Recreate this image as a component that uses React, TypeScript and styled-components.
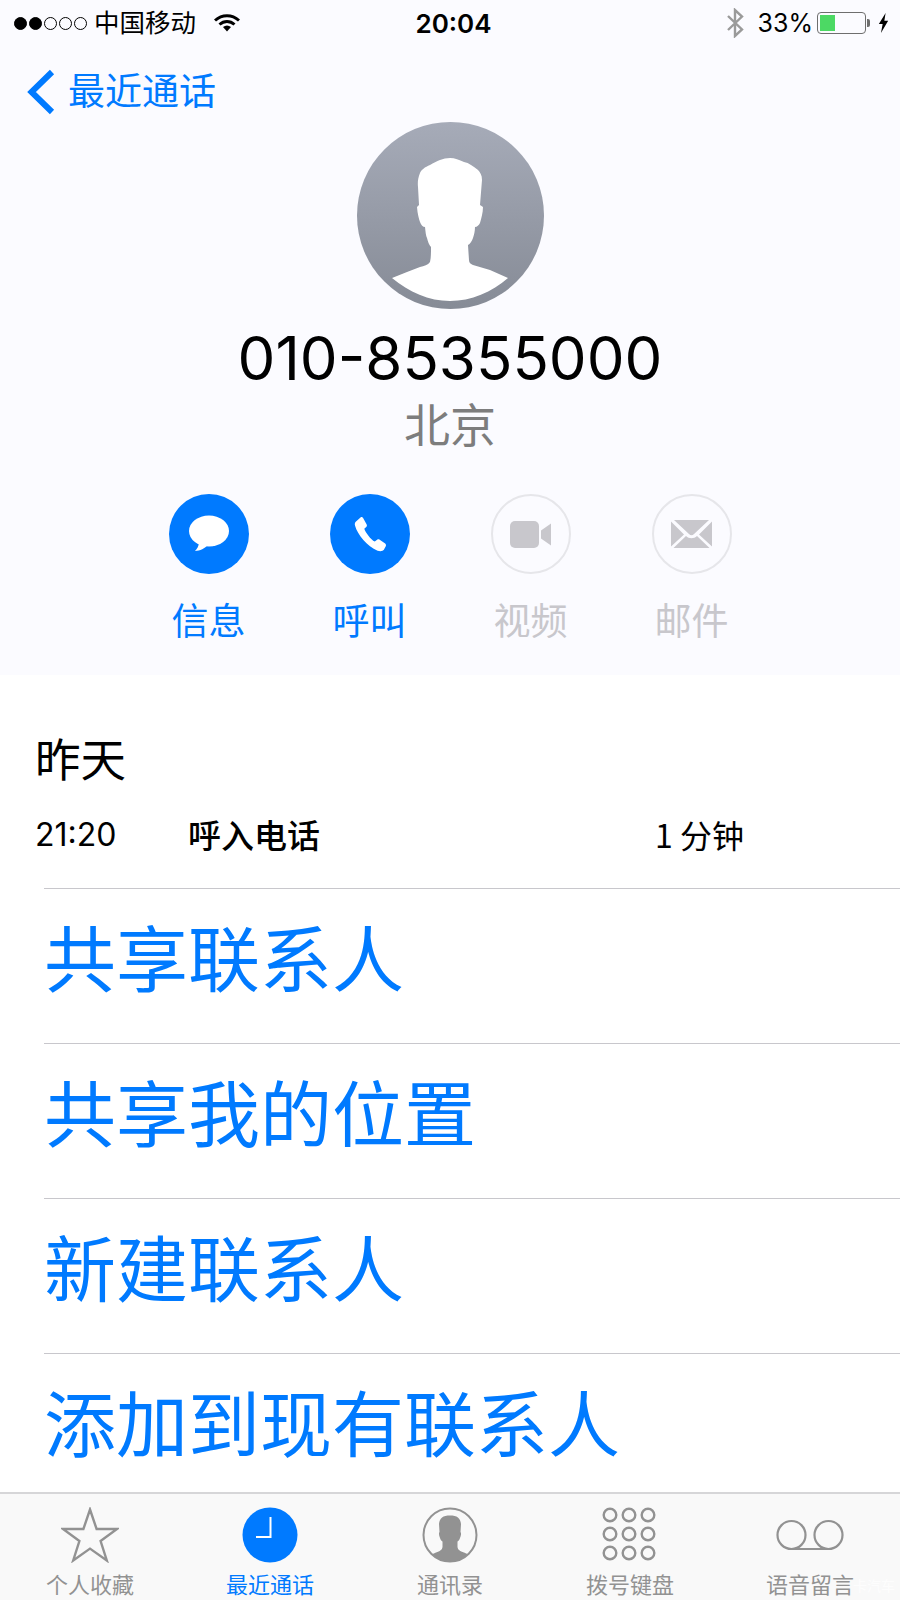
import styled, { createGlobalStyle } from "styled-components";

const CJK = `"Noto Sans CJK SC", "Noto Sans", sans-serif`;
const LATIN = `"Inter", "Noto Sans CJK SC", sans-serif`;
const BLUE = "#007aff";

const GlobalStyle = createGlobalStyle`
  html, body {
    margin: 0;
    padding: 0;
    background: #fff;
  }
`;

const actions = [
  { label: "信息", on: true, icon: "message" },
  { label: "呼叫", on: true, icon: "phone" },
  { label: "视频", on: false, icon: "video" },
  { label: "邮件", on: false, icon: "mail" },
];

const menu = ["共享联系人", "共享我的位置", "新建联系人", "添加到现有联系人"];

function ActionGlyph({ name }: { name: string }) {
  if (name === "message") {
    return (
      <svg width="42" height="38" viewBox="0 0 42 38">
        <ellipse cx="21" cy="16" rx="20" ry="15.5" fill="#fff" />
        <path d="M11 27 C11 31 9 34 7 36 C12 36 17 33 20 30 Z" fill="#fff" />
      </svg>
    );
  }
  if (name === "phone") {
    return (
      <svg width="36" height="38" viewBox="0 0 36 40">
        <path
          d="M3 7 L8 2.5 C9 1.8 10 2 10.6 3 L14.5 10 C15 11 14.8 12 14 12.6 L12 14.4 C13 18 19 26 23 28 L25.5 26 C26.4 25.4 27.4 25.4 28.2 26 L34 30 C35 31 35 32 34.6 33 L32.6 36.6 C31.6 38 29 38.6 26 37.6 C15 33 5 21 2.2 11 C1.8 9.4 2 8 3 7 Z"
          fill="#fff"
        />
      </svg>
    );
  }
  if (name === "video") {
    return (
      <svg width="42" height="27" viewBox="0 0 42 27">
        <rect x="0" y="0" width="29" height="27" rx="5" fill="#c8c7cc" />
        <path d="M31 9.5 L41 2.5 V24.5 L31 17.5 Z" fill="#c8c7cc" />
      </svg>
    );
  }
  return (
    <svg width="41" height="28" viewBox="0 0 41 28">
      <path d="M3 0 H38 L23 14 C21.5 15.6 19.5 15.6 18 14 Z" fill="#c8c7cc" />
      <path d="M0 1.5 L13 14.5 L0 26.5 Z M41 1.5 L28 14.5 L41 26.5 Z" fill="#c8c7cc" />
      <path d="M15 16 C18 19 23 19 26 16 L38.5 28 H2.5 Z" fill="#c8c7cc" />
    </svg>
  );
}

function TabGlyph({ name }: { name: string }) {
  if (name === "star") {
    return (
      <svg width="58" height="56" viewBox="0 0 58 56">
        <path
          d="M29 2.5 L35.6 22 H56 L39.6 34 L45.8 53.5 L29 41.6 L12.2 53.5 L18.4 34 L2 22 H22.4 Z"
          fill="none"
          stroke="#929292"
          strokeWidth="2.4"
        />
      </svg>
    );
  }
  if (name === "clock") {
    return (
      <svg width="56" height="56" viewBox="0 0 56 56">
        <circle cx="28" cy="28" r="27.5" fill={BLUE} />
        <path d="M28.5 10 V30 H14" fill="none" stroke="#fff" strokeWidth="2" />
      </svg>
    );
  }
  if (name === "person") {
    return (
      <svg width="56" height="56" viewBox="0 0 56 56">
        <defs>
          <clipPath id="contact-clip">
            <circle cx="28" cy="28" r="26.5" />
          </clipPath>
        </defs>
        <g clipPath="url(#contact-clip)">
          <path
            d="M28 8.5 C35 8.5 38.5 11 39 17 L38.5 25 C39.5 26 39 29 38 31 C37.5 33 36.5 34 35.5 34.5 L35.5 40 C36 43 38 44 42 45.5 L52 50 V56 H4 V50 L14 45.5 C18 44 20 43 20.5 40 L20.5 34.5 C19.5 34 18.5 33 18 31 C17 29 16.5 26 17.5 25 L17 17 C17.5 11 21 8.5 28 8.5 Z"
            fill="#929292"
          />
        </g>
        <circle cx="28" cy="28" r="26.5" fill="none" stroke="#929292" strokeWidth="2" />
      </svg>
    );
  }
  if (name === "keypad") {
    const spots = [8, 27, 46];
    return (
      <svg width="56" height="56" viewBox="0 0 56 56">
        {spots.map((cy) =>
          spots.map((cx) => (
            <circle
              key={`${cx}-${cy}`}
              cx={cx}
              cy={cy}
              r="6.3"
              fill="none"
              stroke="#929292"
              strokeWidth="2.4"
            />
          ))
        )}
      </svg>
    );
  }
  return (
    <svg width="68" height="32" viewBox="0 0 68 32">
      <circle cx="15.5" cy="16" r="14" fill="none" stroke="#929292" strokeWidth="2.2" />
      <circle cx="52.5" cy="16" r="14" fill="none" stroke="#929292" strokeWidth="2.2" />
      <path d="M15.5 30 H52.5" stroke="#929292" strokeWidth="2.2" />
    </svg>
  );
}

const tabs = [
  { label: "个人收藏", icon: "star", on: false },
  { label: "最近通话", icon: "clock", on: true },
  { label: "通讯录", icon: "person", on: false },
  { label: "拨号键盘", icon: "keypad", on: false },
  { label: "语音留言", icon: "voicemail", on: false },
];

export default function App() {
  return (
    <>
      <GlobalStyle />
      <Screen>
        <Header>
          <StatusBar>
            <StatusLeft>
              <Signal>
                <Dot $full />
                <Dot $full />
                <Dot />
                <Dot />
                <Dot />
              </Signal>
              <Carrier>中国移动</Carrier>
              <svg width="26" height="18" viewBox="0 0 26 18">
                <path d="M1 6.5 C8 0 18 0 25 6.5" fill="none" stroke="#000" strokeWidth="3" />
                <path d="M5.5 10.5 C10 6.5 16 6.5 20.5 10.5" fill="none" stroke="#000" strokeWidth="3" />
                <path d="M9 13 C11.5 11 14.5 11 17 13 L13 17.5 Z" fill="#000" />
              </svg>
            </StatusLeft>
            <Clock>20:04</Clock>
            <StatusRight>
              <svg width="18" height="30" viewBox="0 0 18 30">
                <path
                  d="M2 8 L16 21.5 L9 28 V2 L16 8.5 L2 22"
                  fill="none"
                  stroke="#9a9a9a"
                  strokeWidth="2.4"
                />
              </svg>
              <Percent>33%</Percent>
              <Battery>
                <BatteryFill />
              </Battery>
              <BatteryCap />
              <svg width="11" height="20" viewBox="0 0 13 22" preserveAspectRatio="none">
                <path d="M9 0 L1 12 H5.5 L3.5 22 L12 8.5 H7.5 Z" fill="#000" />
              </svg>
            </StatusRight>
          </StatusBar>
          <BackRow>
            <svg width="30" height="46" viewBox="0 0 30 46">
              <path d="M27 3 L6.5 23 L27 43" fill="none" stroke={BLUE} strokeWidth="6" />
            </svg>
            <BackLabel>最近通话</BackLabel>
          </BackRow>
          <Avatar>
            <svg width="187" height="187" viewBox="0 0 187 187">
              <path
                d="M93 36 C86 36 80 39 73 43 C68 45 64 48 63 51 C61 56 60.5 60 61 65 L62 83 L60 85 C60.5 92 62 97 63 100 C64 103 66 105 68 105 C68.5 110 69 114 70 116 C71 120 72 123 74 125 C74 131 74 136 73 140 C71 143 67 144 63 145 L50 150 L35 156 C52 170 72 179 93 179 C114 179 135 170 151 156 L133 148 L116 143 C113 142 112 140 112 138 L111 123 C113 122 115 119 116 116 C117 113 118 109 118 105 C120 105 122 103 123 101 C124 97 126 91 126 85 L123 83 L125 58 C125 53 123 50 121 48 C116 44 112 41 107 40 C102 38 98 36 93 36 Z"
                fill="#fff"
              />
            </svg>
          </Avatar>
          <PhoneNumber>010-85355000</PhoneNumber>
          <Place>北京</Place>
          <Actions>
            {actions.map((action) => (
              <Action key={action.label}>
                <ActionCircle $on={action.on}>
                  <ActionGlyph name={action.icon} />
                </ActionCircle>
                <ActionLabel $on={action.on}>{action.label}</ActionLabel>
              </Action>
            ))}
          </Actions>
        </Header>
        <History>
          <DayLabel>昨天</DayLabel>
          <CallRow>
            <CallTime>21:20</CallTime>
            <CallType>呼入电话</CallType>
            <CallLength>1 分钟</CallLength>
          </CallRow>
        </History>
        <Menu>
          {menu.map((item) => (
            <MenuItem key={item}>{item}</MenuItem>
          ))}
        </Menu>
        <TabBar>
          {tabs.map((tab) => (
            <Tab key={tab.label}>
              <TabIcon>
                <TabGlyph name={tab.icon} />
              </TabIcon>
              <TabLabel $on={tab.on}>{tab.label}</TabLabel>
            </Tab>
          ))}
          <Watermark>卡汽车</Watermark>
        </TabBar>
      </Screen>
    </>
  );
}

const Screen = styled.div`
  width: 900px;
  height: 1600px;
  overflow: hidden;
  display: flex;
  flex-direction: column;
  background: #fff;
`;

const Header = styled.div`
  height: 675px;
  flex-shrink: 0;
  background: #fbfbff;
  display: flex;
  flex-direction: column;
  align-items: center;
`;

const StatusBar = styled.div`
  width: 100%;
  height: 46px;
  box-sizing: border-box;
  padding: 0 11px 0 14px;
  display: grid;
  grid-template-columns: 1fr auto 1fr;
  align-items: center;
`;

const StatusLeft = styled.div`
  display: flex;
  align-items: center;
`;

const Signal = styled.div`
  display: flex;
  gap: 2px;
  margin-right: 7px;
`;

const Dot = styled.span<{ $full?: boolean }>`
  width: 13px;
  height: 13px;
  box-sizing: border-box;
  border-radius: 50%;
  border: 1px solid #000;
  background: ${(p) => (p.$full ? "#000" : "transparent")};
`;

const Carrier = styled.span`
  font-family: ${CJK};
  font-size: 25.5px;
  line-height: 30px;
  color: #000;
  margin: 0 18px 4px 0;
`;

const Clock = styled.span`
  font-family: ${LATIN};
  font-size: 26px;
  font-weight: 600;
  color: #000;
  margin-left: 4px;
`;

const StatusRight = styled.div`
  display: flex;
  align-items: center;
  justify-content: flex-end;
`;

const Percent = styled.span`
  font-family: ${LATIN};
  font-size: 25px;
  color: #000;
  margin: 0 4px 0 14px;
`;

const Battery = styled.div`
  width: 49px;
  height: 22px;
  box-sizing: border-box;
  padding: 2px;
  border: 1px solid #6e6e6e;
  border-radius: 4px;
`;

const BatteryFill = styled.div`
  width: 15px;
  height: 100%;
  background: #4cd964;
`;

const BatteryCap = styled.span`
  width: 3px;
  height: 8px;
  margin: 0 8px 0 1px;
  background: #6e6e6e;
  border-radius: 0 2px 2px 0;
`;

const BackRow = styled.div`
  align-self: flex-start;
  height: 46px;
  margin: 23px 0 0 25px;
  display: flex;
  align-items: center;
  gap: 13px;
`;

const BackLabel = styled.span`
  font-family: ${CJK};
  font-size: 37px;
  line-height: 46px;
  margin-bottom: 6px;
  color: ${BLUE};
`;

const Avatar = styled.div`
  width: 187px;
  height: 187px;
  margin-top: 7px;
  border-radius: 50%;
  overflow: hidden;
  background: linear-gradient(#a6abb8, #868b96);
`;

const PhoneNumber = styled.div`
  font-family: ${LATIN};
  font-size: 60px;
  line-height: 74px;
  margin-top: 12px;
  color: #000;
`;

const Place = styled.div`
  font-family: ${CJK};
  font-size: 46px;
  line-height: 56px;
  margin-top: -1px;
  color: #7d7d7d;
`;

const Actions = styled.div`
  display: flex;
  gap: 81px;
  margin-top: 44px;
`;

const Action = styled.div`
  width: 80px;
  display: flex;
  flex-direction: column;
  align-items: center;
`;

const ActionCircle = styled.div<{ $on: boolean }>`
  width: 80px;
  height: 80px;
  box-sizing: border-box;
  border-radius: 50%;
  display: flex;
  align-items: center;
  justify-content: center;
  background: ${(p) => (p.$on ? BLUE : "transparent")};
  border: ${(p) => (p.$on ? "none" : "2px solid #e6e6ea")};
`;

const ActionLabel = styled.span<{ $on: boolean }>`
  font-family: ${CJK};
  font-size: 37px;
  line-height: 44px;
  margin-top: 23px;
  white-space: nowrap;
  color: ${(p) => (p.$on ? BLUE : "#c8c7cc")};
`;

const History = styled.div`
  flex-shrink: 0;
  height: 213px;
  box-sizing: border-box;
  padding: 55px 0 0 35px;
`;

const DayLabel = styled.div`
  font-family: ${CJK};
  font-size: 45.5px;
  line-height: 56px;
  margin-top: -1px;
  color: #000;
`;

const CallRow = styled.div`
  display: grid;
  grid-template-columns: 153px 467px auto;
  margin-top: 27px;
  align-items: center;
  line-height: 40px;
  font-size: 32px;
  color: #000;
`;

const CallTime = styled.span`
  font-family: ${LATIN};
  font-size: 32px;
  margin-top: 3px;
`;

const CallType = styled.span`
  font-family: ${CJK};
  font-weight: 500;
  font-size: 33px;
`;

const CallLength = styled.span`
  font-family: ${CJK};
`;

const Menu = styled.div`
  flex: 1;
  min-height: 0;
  display: flex;
  flex-direction: column;
`;

const MenuItem = styled.div`
  height: 155px;
  flex-shrink: 0;
  box-sizing: border-box;
  margin-left: 44px;
  border-top: 1px solid #c8c7cc;
  font-family: ${CJK};
  font-size: 72px;
  line-height: 132px;
  color: ${BLUE};
  white-space: nowrap;
`;

const TabBar = styled.div`
  flex-shrink: 0;
  height: 108px;
  box-sizing: border-box;
  border-top: 2px solid #d6d6d8;
  background: #f9f9f9;
  display: grid;
  grid-template-columns: repeat(5, 180px);
  position: relative;
`;

const Tab = styled.div`
  display: flex;
  flex-direction: column;
  align-items: center;
`;

const TabIcon = styled.div`
  height: 64px;
  margin-top: 9px;
  display: flex;
  align-items: center;
  justify-content: center;
`;

const TabLabel = styled.span<{ $on: boolean }>`
  font-family: ${CJK};
  font-size: 22px;
  line-height: 26px;
  margin-top: 3px;
  color: ${(p) => (p.$on ? BLUE : "#929292")};
`;

const Watermark = styled.span`
  position: absolute;
  right: 5px;
  bottom: 3px;
  font-family: ${CJK};
  font-size: 14px;
  line-height: 24px;
  color: rgba(255, 255, 255, 0.8);
`;
